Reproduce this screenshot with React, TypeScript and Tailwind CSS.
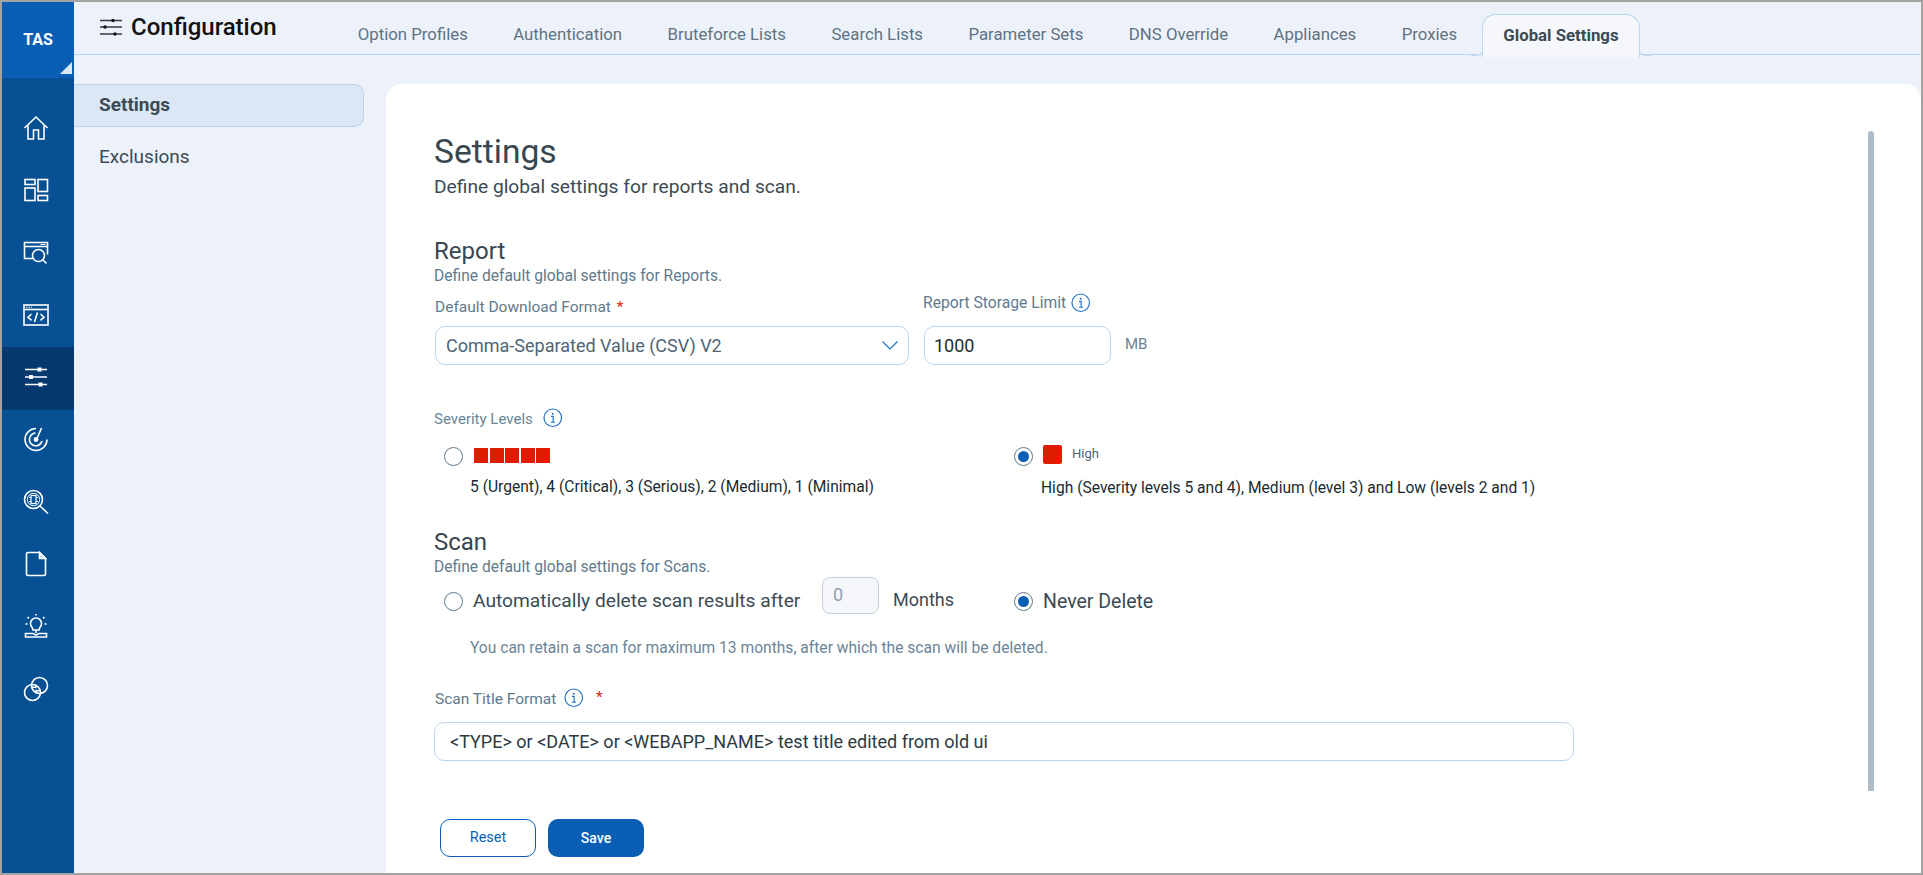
import { ReactNode } from "react";

function NavIcon({ children, active }: { children: ReactNode; active?: boolean }) {
  return (
    <div className={`h-[62.33px] pb-[3px] pr-[4px] flex items-center justify-center ${active ? "bg-[#06396f]" : ""}`}>
      <svg
        viewBox="0 0 26 26"
        className="w-[26px] h-[26px] text-white"
        fill="none"
        stroke="currentColor"
        strokeWidth="1.6"
      >
        {children}
      </svg>
    </div>
  );
}

function InfoIcon() {
  return (
    <svg viewBox="0 0 20 20" className="w-[19.5px] h-[19.5px] text-[#1f6fc4]" fill="none" stroke="currentColor">
      <circle cx="10" cy="10" r="9" strokeWidth="1.2" />
      <circle cx="10" cy="5.8" r="1" fill="currentColor" stroke="none" />
      <path d="M8.2 8.6H10.4V14.4M8 14.6H12.4" strokeWidth="1.2" />
    </svg>
  );
}

function Radio({ checked }: { checked?: boolean }) {
  return (
    <span className="w-[19px] h-[19px] shrink-0 rounded-full border border-[#5f7a8c] bg-white flex items-center justify-center">
      {checked && <span className="w-[11px] h-[11px] rounded-full bg-[#0a5fb4]" />}
    </span>
  );
}

const tabs = [
  "Option Profiles",
  "Authentication",
  "Bruteforce Lists",
  "Search Lists",
  "Parameter Sets",
  "DNS Override",
  "Appliances",
  "Proxies",
];

export default function App() {
  return (
    <div className="w-[1923px] h-[875px] overflow-hidden border-2 border-[#a3a3a3] flex bg-[#edf2fa] font-['Roboto',sans-serif]">
      {/* Left nav */}
      <aside className="w-[72px] shrink-0 bg-[#075094] flex flex-col">
        <div className="relative h-[76px] bg-[#0a5eb3] flex items-center justify-center text-white font-bold text-[16px] mb-[20px]">
          TAS
          <svg viewBox="0 0 12 12" className="absolute right-[2px] bottom-[4px] w-3 h-3">
            <path d="M12 0V12H0Z" fill="#dbe7f4" />
          </svg>
        </div>
        <NavIcon>
          <path d="M1.500 13 13 2l11.500 11M5 10.500V24h5.500v-9h5v9H21V10.500" />
        </NavIcon>
        <NavIcon>
          <rect x="2" y="2.500" width="10" height="5" />
          <rect x="2" y="11" width="10" height="12.500" />
          <rect x="15" y="2.500" width="9.500" height="12" />
          <rect x="15" y="18.500" width="9.500" height="5" />
        </NavIcon>
        <NavIcon>
          <path d="M10 19.500H1.500V3.500h23v12M1.500 7.500h23" />
          <path d="M17.500 5.500h5" strokeWidth="1" />
          <circle cx="15.500" cy="16.500" r="6" />
          <path d="m20 21 3.500 3.500" />
        </NavIcon>
        <NavIcon>
          <rect x="1" y="3" width="24" height="20" />
          <path d="M1 7.500h24" />
          <path d="M3 5.200h6" strokeWidth="1" strokeDasharray="1.500 1" />
          <path d="m8.500 12-3.500 3.200 3.500 3.200M17.500 12l3.500 3.200-3.500 3.200M14.500 10.500l-3 9.500" />
        </NavIcon>
        <NavIcon active>
          <path d="M2 5.500h22M2 13h22M2 20.500h22" />
          <rect x="14.500" y="3.500" width="4" height="4" fill="currentColor" stroke="none" />
          <rect x="6" y="11" width="4" height="4" fill="currentColor" stroke="none" />
          <rect x="15.500" y="18.500" width="4" height="4" fill="currentColor" stroke="none" />
        </NavIcon>
        <NavIcon>
          <path d="M24 13.500A11 11 0 1 1 13 2.500" />
          <path d="M19 15a6.400 6.400 0 1 1-6.500-8" />
          <circle cx="13" cy="13.500" r="2.400" fill="currentColor" stroke="none" />
          <path d="m14 12.500 4.500-10.500" />
        </NavIcon>
        <NavIcon>
          <circle cx="10.500" cy="10.500" r="9" />
          <circle cx="10.500" cy="10.500" r="6.200" strokeWidth="1" />
          <rect x="8" y="6.500" width="5" height="8" strokeWidth="1.200" />
          <path d="M6 8.500h2M6 12.500h2M13 8.500h2M13 12.500h2" strokeWidth="1" />
          <path d="m17 17 8 7.500" />
        </NavIcon>
        <NavIcon>
          <path d="M16.500 1.500H5a1.500 1.500 0 0 0-1.500 1.500v20A1.500 1.500 0 0 0 5 24.500h16a1.500 1.500 0 0 0 1.500-1.500V7.500Z" />
          <path d="M16.500 1.500v6h6Z" fill="#bcd6ee" />
        </NavIcon>
        <NavIcon>
          <path d="M10 17c0-2.500-2.500-3-2.500-6.500a5.500 5.500 0 0 1 11 0C18.500 14 16 14.500 16 17Z" />
          <path d="M13 17v3M2.500 20.500H10l3 1.500 3-1.500h7.500v3.500h-21Z" />
          <path d="M13 1v1.500M4.500 4l1.500 1.300M21.500 4 20 5.300M2.500 11H4.500M21.500 11h2" />
        </NavIcon>
        <NavIcon>
          <circle cx="9.500" cy="16.500" r="8" />
          <circle cx="16.500" cy="9.500" r="8" />
          <path d="m8 11 5 .5-.5-3M18 15l-5-.5.5 3" strokeWidth="1.400" />
        </NavIcon>
      </aside>

      <div className="flex-1 flex flex-col min-w-0">
        {/* Top bar */}
        <header className="h-[53px] shrink-0 border-b border-[#bcd6ee] flex items-start relative">
          <div className="w-[261px] shrink-0 h-[52px] pl-[26px] flex items-center gap-[9px] pb-[3px]">
            <svg viewBox="0 0 22 18" className="w-[22px] h-[18px]" fill="none">
              <path d="M0 2.500h22M0 9h22M0 16h22" stroke="#3a3a3a" strokeWidth="1.300" />
              <circle cx="13" cy="2.500" r="1.700" fill="#111" />
              <circle cx="5" cy="9" r="1.700" fill="#111" />
              <circle cx="15" cy="16" r="1.700" fill="#111" />
            </svg>
            <span className="text-[24px] font-medium text-[#111] leading-none">Configuration</span>
          </div>
          <nav className="flex items-end h-[53px] text-[16.8px] text-[#5f7282]">
            {tabs.map((t) => (
              <a key={t} className="px-[22.7px] h-[52px] pt-[19px] whitespace-nowrap">
                {t}
              </a>
            ))}
            <a className="relative ml-[2.5px] px-5 h-[43px] pt-[8px] -mb-[2px] bg-[#f5f7fa] border border-b-0 border-[#bcd6ee] rounded-t-[14px] font-bold text-[#3c4a54] whitespace-nowrap">
              Global Settings
              <svg viewBox="0 0 12 6" className="absolute -left-[12px] bottom-[1px] w-3 h-[6px]" fill="none">
                <path d="M0 5.500h5c3 0 6-1.500 6.500-5.500" stroke="#bcd6ee" />
              </svg>
              <svg viewBox="0 0 12 6" className="absolute -right-[12px] bottom-[1px] w-3 h-[6px]" fill="none">
                <path d="M12 5.500H7c-3 0-6-1.500-6.500-5.500" stroke="#bcd6ee" />
              </svg>
            </a>
          </nav>
        </header>

        <div className="flex-1 flex min-h-0 pt-[29px]">
          {/* Sub navigation */}
          <div className="w-[312px] shrink-0 text-[19px] text-[#3c4a54]">
            <div className="w-[290px] h-[43px] pl-[25px] pb-[1px] flex items-center bg-[#dbe7f4] border border-l-0 border-[#bcd4ea] rounded-r-[10px] font-bold">
              Settings
            </div>
            <div className="h-[30px] mt-[15px] pl-[25px] flex items-center">Exclusions</div>
          </div>

          {/* Main card */}
          <main className="relative flex-1 bg-white rounded-t-[16px] pl-[48px] pt-[50px] min-w-0">
            <div className="absolute left-[1482px] top-[47px] w-[6px] h-[660px] bg-[#adbcc6] rounded-t-[3px]" />

            <h1 className="text-[33.6px] leading-[36px] text-[#37464f]">Settings</h1>
            <p className="text-[19.2px] leading-[21px] mt-[6px] text-[#3c4a54]">
              Define global settings for reports and scan.
            </p>

            <h2 className="text-[24px] leading-[28px] mt-[40px] text-[#37464f]">Report</h2>
            <p className="text-[15.6px] leading-[18px] mt-[2px] text-[#5f7a8c]">
              Define default global settings for Reports.
            </p>

            <div className="flex mt-[9px]">
              <div className="w-[490px]">
                <label className="h-[22px] pl-[1px] pt-[4px] block text-[15.5px] leading-[18px] text-[#5f7a8c]">
                  Default Download Format <span className="text-[#e01f00] ml-[2px]">*</span>
                </label>
                <div className="mt-[10px] ml-[1px] w-[474px] h-[39px] pl-[10px] pr-[10px] pb-[1px] flex items-center justify-between rounded-[10px] border border-[#bcd6ee] text-[18px] text-[#4f6575]">
                  Comma-Separated Value (CSV) V2
                  <svg viewBox="0 0 16 9" className="w-4 h-[9px]" fill="none">
                    <path d="m.5.5 7.500 7.500 7.500-7.500" stroke="#1f6fc4" strokeWidth="1.200" />
                  </svg>
                </div>
              </div>
              <div>
                <label className="h-[22px] -mt-[2px] -ml-[1px] flex items-center gap-[5px] text-[15.7px] text-[#5f7a8c]">
                  Report Storage Limit <InfoIcon />
                </label>
                <div className="flex mt-[12px]">
                  <div className="w-[187px] h-[39px] pl-[9px] pb-[1px] flex items-center rounded-[10px] border border-[#bcd6ee] text-[18px] text-[#1f2a30]">
                    1000
                  </div>
                  <span className="ml-[14px] mt-[9px] text-[15px] leading-[18px] text-[#6d8291]">MB</span>
                </div>
              </div>
            </div>

            <div className="mt-[43px] flex items-center gap-[10px] text-[15px] leading-[22px] text-[#6a8598]">
              Severity Levels
              <span className="-mt-[2px]">
                <InfoIcon />
              </span>
            </div>

            <div className="flex mt-[15px]">
              <div className="w-[580px] pl-[10px]">
                <div className="flex items-center gap-[11px] h-[22px]">
                  <Radio />
                  <div className="flex gap-[1.5px] -mt-[2px]">
                    <span className="w-[14px] h-[15px] bg-[#e21c00]" />
                    <span className="w-[14px] h-[15px] bg-[#e21c00]" />
                    <span className="w-[14px] h-[15px] bg-[#e21c00]" />
                    <span className="w-[14px] h-[15px] bg-[#e21c00]" />
                    <span className="w-[14px] h-[15px] bg-[#e21c00]" />
                  </div>
                </div>
                <p className="ml-[26px] mt-[11px] text-[15.6px] leading-[18px] text-[#1a2a30]">
                  5 (Urgent), 4 (Critical), 3 (Serious), 2 (Medium), 1 (Minimal)
                </p>
              </div>
              <div>
                <div className="flex items-center gap-[10px] h-[22px]">
                  <Radio checked />
                  <div className="flex items-center gap-[10px] -mt-[4px]">
                    <span className="w-[19px] h-[19px] rounded-[2px] bg-[#e21c00]" />
                    <span className="text-[13px] text-[#55646e]">High</span>
                  </div>
                </div>
                <p className="ml-[27px] mt-[12px] text-[15.6px] leading-[18px] text-[#1a2a30]">
                  High (Severity levels 5 and 4), Medium (level 3) and Low (levels 2 and 1)
                </p>
              </div>
            </div>

            <h2 className="text-[24px] leading-[28px] mt-[31px] text-[#37464f]">Scan</h2>
            <p className="text-[15.6px] leading-[18px] mt-[2px] text-[#5f7a8c]">
              Define default global settings for Scans.
            </p>

            <div className="flex items-center h-[37px] mt-[1px] pl-[10px]">
              <span className="mt-[12px] flex items-center">
                <Radio />
                <span className="ml-[10px] w-[349px] text-[19.2px] text-[#3c4a54]">
                  Automatically delete scan results after
                </span>
              </span>
              <div className="w-[57px] h-[37px] pl-[10px] pb-[2px] flex items-center rounded-[8px] border border-[#c3d0da] bg-[#f5f7fa] text-[18px] text-[#8da2b0]">
                0
              </div>
              <span className="ml-[14px] mt-[8px] text-[18px] text-[#3c4a54]">Months</span>
              <div className="ml-[60px] mt-[12px] flex items-center gap-[10px]">
                <Radio checked />
                <span className="text-[19.5px] text-[#3c4a54]">Never Delete</span>
              </div>
            </div>

            <p className="ml-[36px] mt-[25px] text-[15.6px] leading-[18px] text-[#6a8598]">
              You can retain a scan for maximum 13 months, after which the scan will be deleted.
            </p>

            <div className="flex items-center gap-[8px] mt-[29px] pl-[1px] h-[24px] text-[15.5px] text-[#5f7a8c]">
              <span className="mt-[4px]">Scan Title Format</span> <InfoIcon />
              <span className="text-[#e01f00] ml-[4px]">*</span>
            </div>

            <div className="mt-[12px] w-[1140px] h-[39px] pl-[15px] flex items-center rounded-[10px] border border-[#bcd6ee] text-[18px] text-[#2c3a42]">
              {"<TYPE> or <DATE> or <WEBAPP_NAME> test title edited from old ui"}
            </div>

            <div className="flex gap-[12px] mt-[58px] ml-[6px]">
              <button className="w-[96px] h-[38px] rounded-[10px] border border-[#0a5fb4] text-[14.5px] text-[#0a5fb4]">
                Reset
              </button>
              <button className="w-[96px] h-[38px] rounded-[10px] bg-[#0a5fb4] text-[14px] font-medium text-white">
                Save
              </button>
            </div>
          </main>
        </div>
      </div>
    </div>
  );
}
